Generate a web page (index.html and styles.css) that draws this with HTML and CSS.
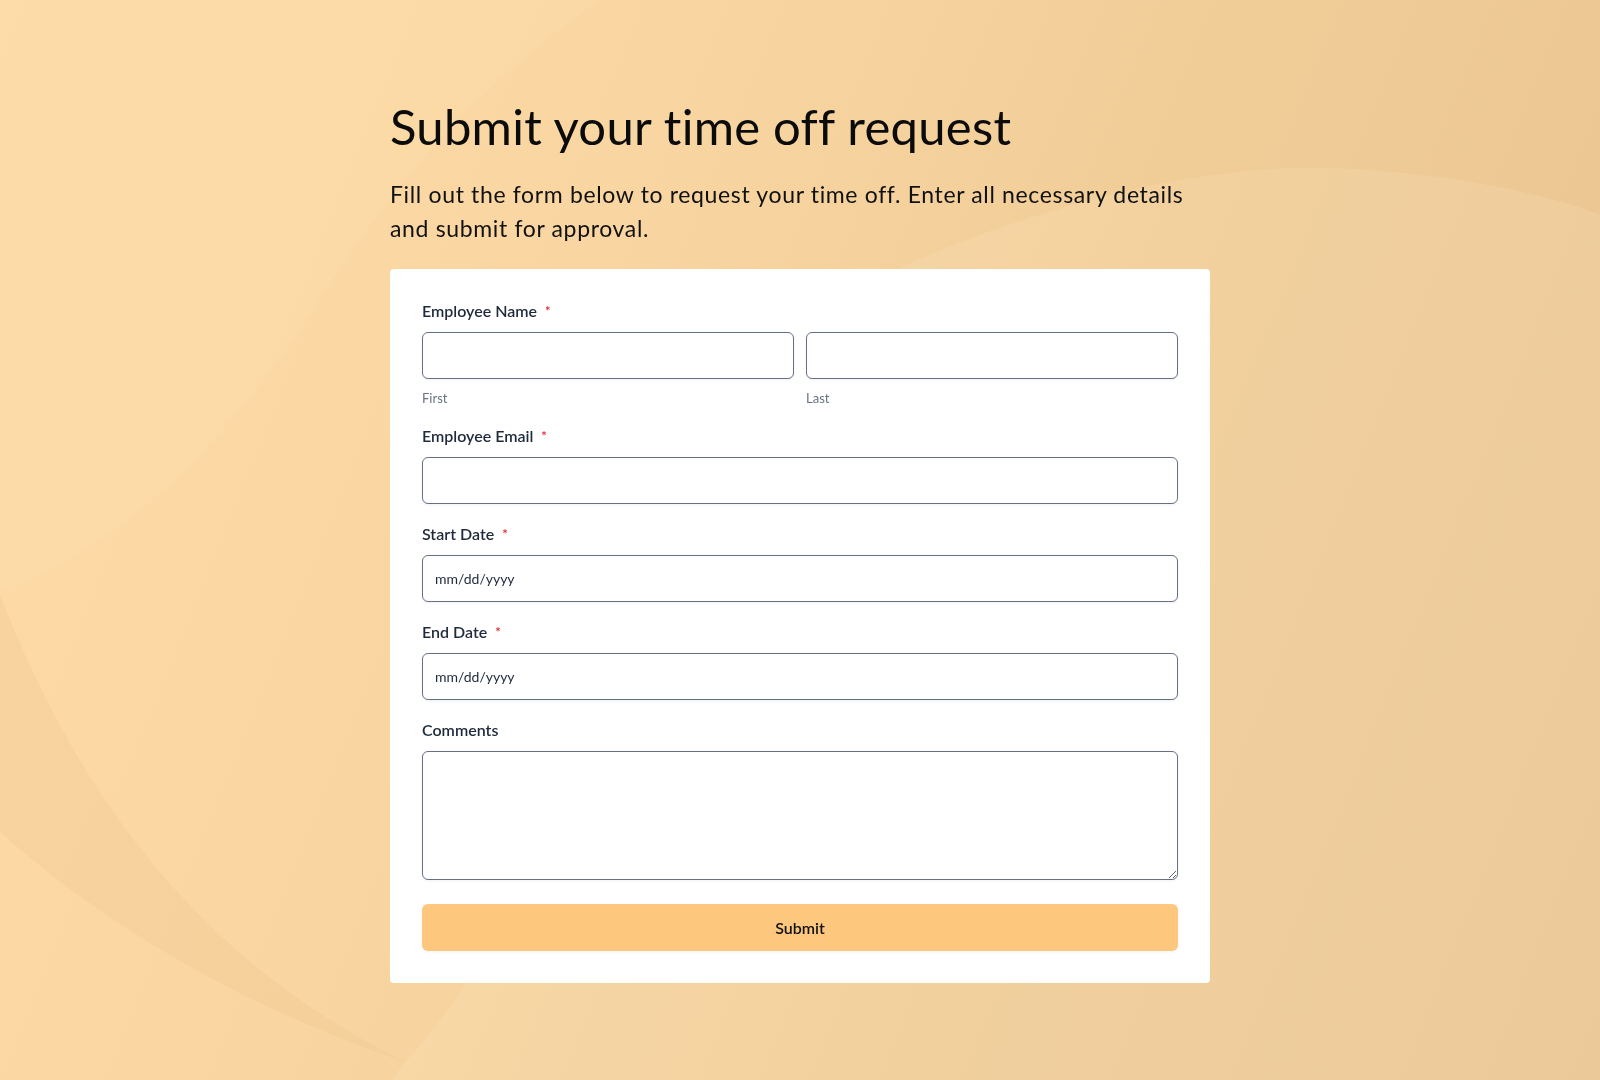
FILE: index.html
```html
<!DOCTYPE html>
<html lang="en">
<head>
    <meta charset="UTF-8">
    <meta name="viewport" content="width=device-width, initial-scale=1.0">
    <title>Time Off Request</title>
    <link rel="stylesheet" href="styles.css">
</head>
<body>
    <!-- decorative swirls behind the page -->
    <svg class="backdrop" viewBox="0 0 1600 1080" preserveAspectRatio="none" aria-hidden="true">
        <path class="swirl-top" d="M0,0 L600,0 C470,90 380,200 300,330 C200,480 90,560 0,590 Z"/>
        <path class="swirl-light" d="M392,1080 L405,1062 C600,850 700,380 906,265 C1100,180 1250,165 1330,168 C1450,172 1550,195 1600,215 L1600,1080 Z"/>
        <path class="swirl-dark" d="M0,595 C80,800 200,960 405,1062 C250,1010 110,930 0,832 Z"/>
    </svg>

    <main class="page">
        <h1 class="page-title">Submit your time off request</h1>
        <p class="page-intro">
            Fill out the form below to request your time off. Enter all necessary details and submit for approval.
        </p>

        <form class="request-card" onsubmit="return false;">
            <div class="field">
                <label class="field-label">Employee Name <span class="req">*</span></label>
                <div class="name-row">
                    <div class="name-part">
                        <input class="input" type="text">
                        <span class="hint">First</span>
                    </div>
                    <div class="name-part">
                        <input class="input" type="text">
                        <span class="hint">Last</span>
                    </div>
                </div>
            </div>

            <div class="field">
                <label class="field-label">Employee Email <span class="req">*</span></label>
                <input class="input" type="email">
            </div>

            <div class="field">
                <label class="field-label">Start Date <span class="req">*</span></label>
                <input class="input input-date" type="text" placeholder="mm/dd/yyyy">
            </div>

            <div class="field">
                <label class="field-label">End Date <span class="req">*</span></label>
                <input class="input input-date" type="text" placeholder="mm/dd/yyyy">
            </div>

            <div class="field">
                <label class="field-label">Comments</label>
                <textarea class="input textarea"></textarea>
            </div>

            <button class="btn-submit" type="submit">Submit</button>
        </form>
    </main>
</body>
</html>
```

FILE: styles.css
```css
* {
    margin: 0;
    padding: 0;
    box-sizing: border-box;
}

body {
    font-family: 'Lato', 'Noto Sans', sans-serif;
    color: #111;
    min-height: 100vh;
    background: linear-gradient(112deg, #fedba7 0%, #f9d6a1 35%, #f0cc97 62%, #e8c390 100%);
    background-attachment: fixed;
}

.backdrop {
    position: fixed;
    inset: 0;
    width: 100%;
    height: 100%;
    z-index: -1;
}

.swirl-light {
    fill: rgba(255, 238, 205, 0.16);
}

.swirl-dark {
    fill: rgba(196, 144, 80, 0.07);
}

.swirl-top {
    fill: rgba(255, 240, 210, 0.08);
}

.page {
    width: 820px;
    margin: 0 auto;
    padding: 97px 0 60px;
}

.page-title {
    font-size: 49px;
    font-weight: 400;
    line-height: 1.2;
    letter-spacing: 0.25px;
    color: #0b0b0b;
}

.page-intro {
    margin-top: 21px;
    font-size: 23px;
    line-height: 34px;
    letter-spacing: 0.65px;
    color: #111;
}

.request-card {
    margin-top: 24px;
    background: #fff;
    border-radius: 4px;
    padding: 31px 32px 32px;
    display: flex;
    flex-direction: column;
    gap: 19px;
}

.field {
    display: flex;
    flex-direction: column;
}

.field-label {
    font-size: 16px;
    font-weight: 600;
    line-height: 22px;
    color: #1e293b;
    margin-bottom: 10px;
}

.req {
    color: #dc2626;
    font-size: 13px;
    margin-left: 4px;
    vertical-align: 1px;
}

.name-row {
    display: grid;
    grid-template-columns: 1fr 1fr;
    gap: 12px;
}

.name-part {
    display: flex;
    flex-direction: column;
}

.input {
    display: block;
    width: 100%;
    height: 47px;
    border: 1px solid #667085;
    border-radius: 6px;
    background: #fff;
    padding: 0 12px;
    font-family: inherit;
    font-size: 14px;
    color: #1e293b;
    box-shadow: 0 1px 3px rgba(15, 23, 42, 0.06);
    outline: none;
}

.input-date::placeholder {
    color: #1e293b;
    opacity: 1;
}

.textarea {
    height: 129px;
    padding: 10px 12px;
    resize: vertical;
}

.hint {
    margin-top: 11px;
    font-size: 13px;
    line-height: 16px;
    color: #6b7280;
}

.btn-submit {
    margin-top: 5px;
    height: 47px;
    border: none;
    border-radius: 6px;
    background: #fdc87e;
    font-family: inherit;
    font-size: 16px;
    font-weight: 600;
    color: #111;
    cursor: pointer;
    box-shadow: 0 1px 3px rgba(15, 23, 42, 0.06);
}

.btn-submit:hover {
    background: #fcc070;
}
```
